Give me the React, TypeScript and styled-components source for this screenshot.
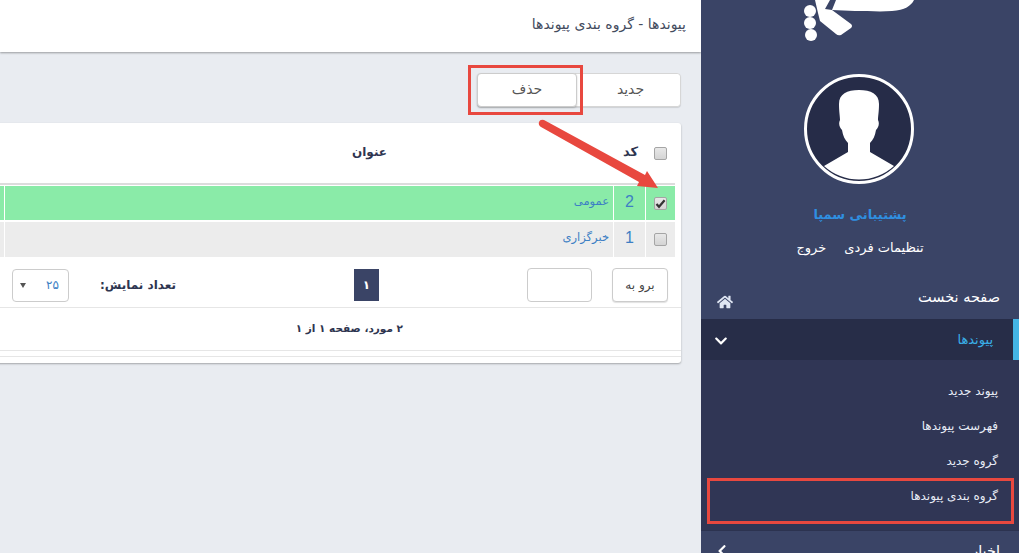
import React from "react";
import styled, { createGlobalStyle } from "styled-components";
import { FaHome, FaChevronDown, FaChevronLeft } from "react-icons/fa";

const Global = createGlobalStyle`
  html, body { margin: 0; padding: 0; background: #e9ecf1; }
  body { font-family: "DejaVu Sans", sans-serif; overflow: hidden; }
  * { box-sizing: border-box; }
`;

const Page = styled.div`
  position: relative;
  display: flex;
  width: 1019px;
  height: 553px;
  overflow: hidden;
`;
const Main = styled.main`
  width: 701px;
  flex: none;
  overflow: hidden;
  direction: rtl;
  background: #e9ecf1;
`;
const TopBar = styled.header`
  height: 52px;
  background: #fff;
  box-shadow: 0 1px 2px rgba(0, 0, 0, 0.35);
  padding: 15px 15px 0 0;
  font-size: 14px;
  line-height: 18px;
  color: #444c5e;
`;
const Toolbar = styled.div`
  display: flex;
  margin: 21px 20px 0 0;
  height: 34px;
  width: 204px;
  background: #fff;
  border: 1px solid #d6d6d6;
  border-radius: 4px;
  box-shadow: 0 1px 1px rgba(0, 0, 0, 0.12);
`;
const ToolButton = styled.button<{ $raised?: boolean }>`
  flex: none;
  font: 14px "DejaVu Sans", sans-serif;
  color: #555;
  background: #fff;
  height: ${(p) => (p.$raised ? "34px" : "32px")};
  width: ${(p) => (p.$raised ? "100px" : "103px")};
  margin: ${(p) => (p.$raised ? "-1px 0 0 -1px" : "0")};
  border: ${(p) => (p.$raised ? "1px solid #ccc" : "none")};
  border-radius: 4px;
  box-shadow: ${(p) => (p.$raised ? "0 1px 2px rgba(0,0,0,.2)" : "none")};
  padding: ${(p) => (p.$raised ? "0 0 3px" : "0 0 3px 4px")};
`;
const Card = styled.section`
  margin: 16px 20px 0 -30px;
  height: 240px;
  background: #fff;
  border-radius: 3px;
  box-shadow: 0 1px 2px rgba(0, 0, 0, 0.3);
  padding-right: 6px;
`;
const columns = "30px 32px 609px 1fr";
const HeadRow = styled.div`
  display: grid;
  grid-template-columns: ${columns};
  height: 62px;
  border-bottom: 2px solid #dcdcdc;
  align-items: center;
  font-size: 12px;
  font-weight: bold;
  color: #2e3550;
`;
const Row = styled.div<{ $bg: string }>`
  display: grid;
  grid-template-columns: ${columns};
  height: 34px;
  margin-top: 1px;
  background: ${(p) => p.$bg};
  align-items: stretch;
  & + & {
    height: 35px;
    margin-top: 2px;
  }
`;
const Cell = styled.div`
  border-left: 1px solid #fff;
  display: flex;
  align-items: center;
`;
const CheckCell = styled(Cell)`
  justify-content: center;
`;
const HeadCheckCell = styled(CheckCell)`
  border-left: none;
`;
const CodeCell = styled(Cell)`
  justify-content: center;
  padding-bottom: 3px;
  font: 16px "Liberation Sans", sans-serif;
  color: #3d7fc4;
`;
const TitleCell = styled(Cell)`
  padding: 0 4px 5px 0;
  font-size: 11.5px;
  color: #3d7fc4;
`;
const CodeHead = styled.div`
  padding-right: 7px;
  padding-bottom: 3px;
  font-size: 13px;
`;
const TitleHead = styled.div`
  padding-right: 226px;
  padding-bottom: 3px;
`;
const Box = styled.span`
  display: flex;
  align-items: center;
  justify-content: center;
  width: 13px;
  height: 13px;
  border: 1px solid #a5a5a5;
  border-radius: 2px;
  background: linear-gradient(#e8e8e8, #d4d4d4);
  svg {
    display: block;
    flex: none;
  }
`;
const Pager = styled.div`
  display: flex;
  align-items: center;
  height: 51px;
  margin-right: -6px;
  padding: 6px 13px 0 0;
  border-bottom: 1px solid #e6e6e6;
`;
const GoButton = styled.button`
  font: 12px "DejaVu Sans", sans-serif;
  color: #444;
  background: #fff;
  width: 56px;
  height: 34px;
  padding: 0;
  border: 1px solid #ccc;
  border-radius: 4px;
  box-shadow: 0 1px 1px rgba(0, 0, 0, 0.12);
`;
const GoInput = styled.div`
  width: 65px;
  height: 34px;
  margin-right: 20px;
  border: 1px solid #ccc;
  border-radius: 4px;
`;
const PageBox = styled.div`
  display: flex;
  align-items: center;
  justify-content: center;
  width: 25px;
  height: 32px;
  margin-right: 148px;
  background: #3a4466;
  color: #fff;
  font-size: 12px;
  font-weight: bold;
`;
const ShowLabel = styled.div`
  width: 77px;
  margin-right: 178px;
  white-space: nowrap;
  font-size: 12px;
  font-weight: bold;
  color: #2e3550;
`;
const Select = styled.div`
  display: flex;
  align-items: center;
  justify-content: space-between;
  width: 57px;
  height: 33px;
  margin-right: 30px;
  padding: 0 9px 0 7px;
  border: 1px solid #ccc;
  border-radius: 4px;
  font-size: 12px;
  color: #3d7fc4;
`;
const Caret = styled.span`
  width: 0;
  height: 0;
  border-left: 3px solid transparent;
  border-right: 3px solid transparent;
  border-top: 5px solid #555;
`;
const Summary = styled.div`
  height: 43px;
  margin-right: -6px;
  padding: 11px 278px 0 0;
  border-bottom: 1px solid #e6e6e6;
  font-size: 10.5px;
  line-height: 18px;
  font-weight: bold;
  color: #2e3550;
`;
const CardTail = styled.div`
  height: 6px;
  margin-right: -6px;
  border-bottom: 1px solid #e6e6e6;
`;

const Sidebar = styled.aside`
  flex: 1;
  direction: rtl;
  background: #3a4466;
  color: #fff;
  overflow: hidden;
`;
const Logo = styled.svg`
  display: block;
  margin: 0 auto;
`;
const Avatar = styled.svg`
  display: block;
  margin: 29px auto 0;
  transform: translateX(-1px);
`;
const UserName = styled.div`
  margin-top: 21px;
  text-align: center;
  font-size: 13px;
  line-height: 20px;
  font-weight: bold;
  color: #2f8fe0;
`;
const UserLinks = styled.div`
  display: flex;
  justify-content: center;
  gap: 18px;
  margin-top: 13px;
  font-size: 13px;
  line-height: 20px;
  color: #fff;
`;
const MenuList = styled.nav`
  margin-top: 22px;
`;
const MenuRow = styled.div<{ $active?: boolean }>`
  display: flex;
  align-items: center;
  justify-content: space-between;
  height: ${(p) => (p.$active ? "41px" : "39px")};
  padding: ${(p) => (p.$active ? "0 20px 0 0" : "0 19px 0 0")};
  background: ${(p) => (p.$active ? "#272d48" : "transparent")};
  border-right: ${(p) => (p.$active ? "6px solid #44b5e5" : "none")};
  color: ${(p) => (p.$active ? "#3ab0e8" : "#fff")};
  font-size: ${(p) => (p.$active ? "13px" : "14.5px")};
`;
const RowLabel = styled.span<{ $lift: number }>`
  padding-bottom: ${(p) => p.$lift}px;
`;
const RowIcon = styled.span<{ $x: number; $y: number }>`
  display: flex;
  margin-left: ${(p) => p.$x}px;
  margin-top: ${(p) => p.$y}px;
  color: #dfe6f3;
`;
const SubMenu = styled.div`
  background: #303655;
  padding: 14px 0 16px;
  border-bottom: 1px solid #2c3350;
`;
const SubItem = styled.div`
  height: 35px;
  line-height: 35px;
  padding-right: 21px;
  font-size: 12px;
  color: #e8edf7;
`;
const Annotation = styled.div<{ $x: number; $y: number; $w: number; $h: number }>`
  position: absolute;
  left: ${(p) => p.$x}px;
  top: ${(p) => p.$y}px;
  width: ${(p) => p.$w}px;
  height: ${(p) => p.$h}px;
  border: 3px solid #e8483f;
  pointer-events: none;
`;
const Arrow = styled.svg`
  position: absolute;
  left: 530px;
  top: 110px;
`;

const Tick = () => (
  <svg width="11" height="11" viewBox="0 0 11 11">
    <path d="M1.5 6 L4 8.8 L9.6 2.2" fill="none" stroke="#333" strokeWidth="2.2" />
  </svg>
);

export default function App() {
  return (
    <Page>
      <Global />
      <Main>
        <TopBar>پیوندها - گروه بندی پیوندها</TopBar>
        <Toolbar>
          <ToolButton>جدید</ToolButton>
          <ToolButton $raised>حذف</ToolButton>
        </Toolbar>
        <Card>
          <HeadRow>
            <HeadCheckCell>
              <Box />
            </HeadCheckCell>
            <CodeHead>کد</CodeHead>
            <TitleHead>عنوان</TitleHead>
          </HeadRow>
          <Row $bg="#8aeba8">
            <CheckCell>
              <Box>
                <Tick />
              </Box>
            </CheckCell>
            <CodeCell>2</CodeCell>
            <TitleCell>عمومی</TitleCell>
            <div />
          </Row>
          <Row $bg="#ececec">
            <CheckCell>
              <Box />
            </CheckCell>
            <CodeCell>1</CodeCell>
            <TitleCell>خبرگزاری</TitleCell>
            <div />
          </Row>
          <Pager>
            <GoButton>برو به</GoButton>
            <GoInput />
            <PageBox>۱</PageBox>
            <ShowLabel>تعداد نمایش:</ShowLabel>
            <Select>
              <span>۲۵</span>
              <Caret />
            </Select>
          </Pager>
          <Summary>۲ مورد، صفحه ۱ از ۱</Summary>
          <CardTail />
        </Card>
      </Main>
      <Sidebar>
        <Logo width="120" height="45" viewBox="800 0 120 45">
          <path
            d="M815 0 L830 0 L825 9 L832 10 L851 24 Q853 26 851 28 L841 35 Q838 36 836 34 L820 21 L818 13 Z"
            fill="#fff"
          />
          <path
            d="M836 0 L914 0 C911 6 905 10 892 11 C880 12 868 11 855 11 L832 10 Z"
            fill="#fff"
          />
          <circle cx="810" cy="11" r="6" fill="#fff" />
          <circle cx="810" cy="23" r="6" fill="#fff" />
          <circle cx="811" cy="35" r="6" fill="#fff" />
        </Logo>
        <Avatar width="110" height="110" viewBox="0 0 110 110">
          <circle cx="55" cy="55" r="53.5" fill="#262c48" stroke="#fff" strokeWidth="3" />
          <path
            d="M55 16 C67 16 75 20 75 30 C75 38 74 42 74 46 C76 50 74 54 72 56 C71 62 69 66 66 69 L66 78 L90 92 A52 52 0 0 1 20 92 L44 78 L44 69 C41 66 39 62 38 56 C36 54 34 50 36 46 C36 42 35 38 35 30 C35 20 43 16 55 16 Z"
            fill="#fff"
          />
        </Avatar>
        <UserName>پشتیبانی سمپا</UserName>
        <UserLinks>
          <span>تنظیمات فردی</span>
          <span>خروج</span>
        </UserLinks>
        <MenuList>
          <MenuRow>
            <RowLabel $lift={5}>صفحه نخست</RowLabel>
            <RowIcon $x={16} $y={5}>
              <FaHome size={16} />
            </RowIcon>
          </MenuRow>
          <MenuRow $active>
            <RowLabel $lift={1}>پیوندها</RowLabel>
            <RowIcon $x={13} $y={2}>
              <FaChevronDown size={14} color="#fff" />
            </RowIcon>
          </MenuRow>
          <SubMenu>
            <SubItem>پیوند جدید</SubItem>
            <SubItem>فهرست پیوندها</SubItem>
            <SubItem>گروه جدید</SubItem>
            <SubItem>گروه بندی پیوندها</SubItem>
          </SubMenu>
          <MenuRow>
            <RowLabel $lift={0}>اخبار</RowLabel>
            <RowIcon $x={14} $y={0}>
              <FaChevronLeft size={14} color="#fff" />
            </RowIcon>
          </MenuRow>
        </MenuList>
      </Sidebar>
      <Annotation $x={468} $y={65} $w={115} $h={50} />
      <Annotation $x={707} $y={478} $w={307} $h={46} />
      <Arrow width="140" height="90" viewBox="530 110 140 90">
        <path d="M539 122 Q540 119 544 120 L645 175 L647 171 L658 188 L637 186 L639 182 L541 127 Q538 125 539 122 Z" fill="#e8483f" />
      </Arrow>
    </Page>
  );
}
